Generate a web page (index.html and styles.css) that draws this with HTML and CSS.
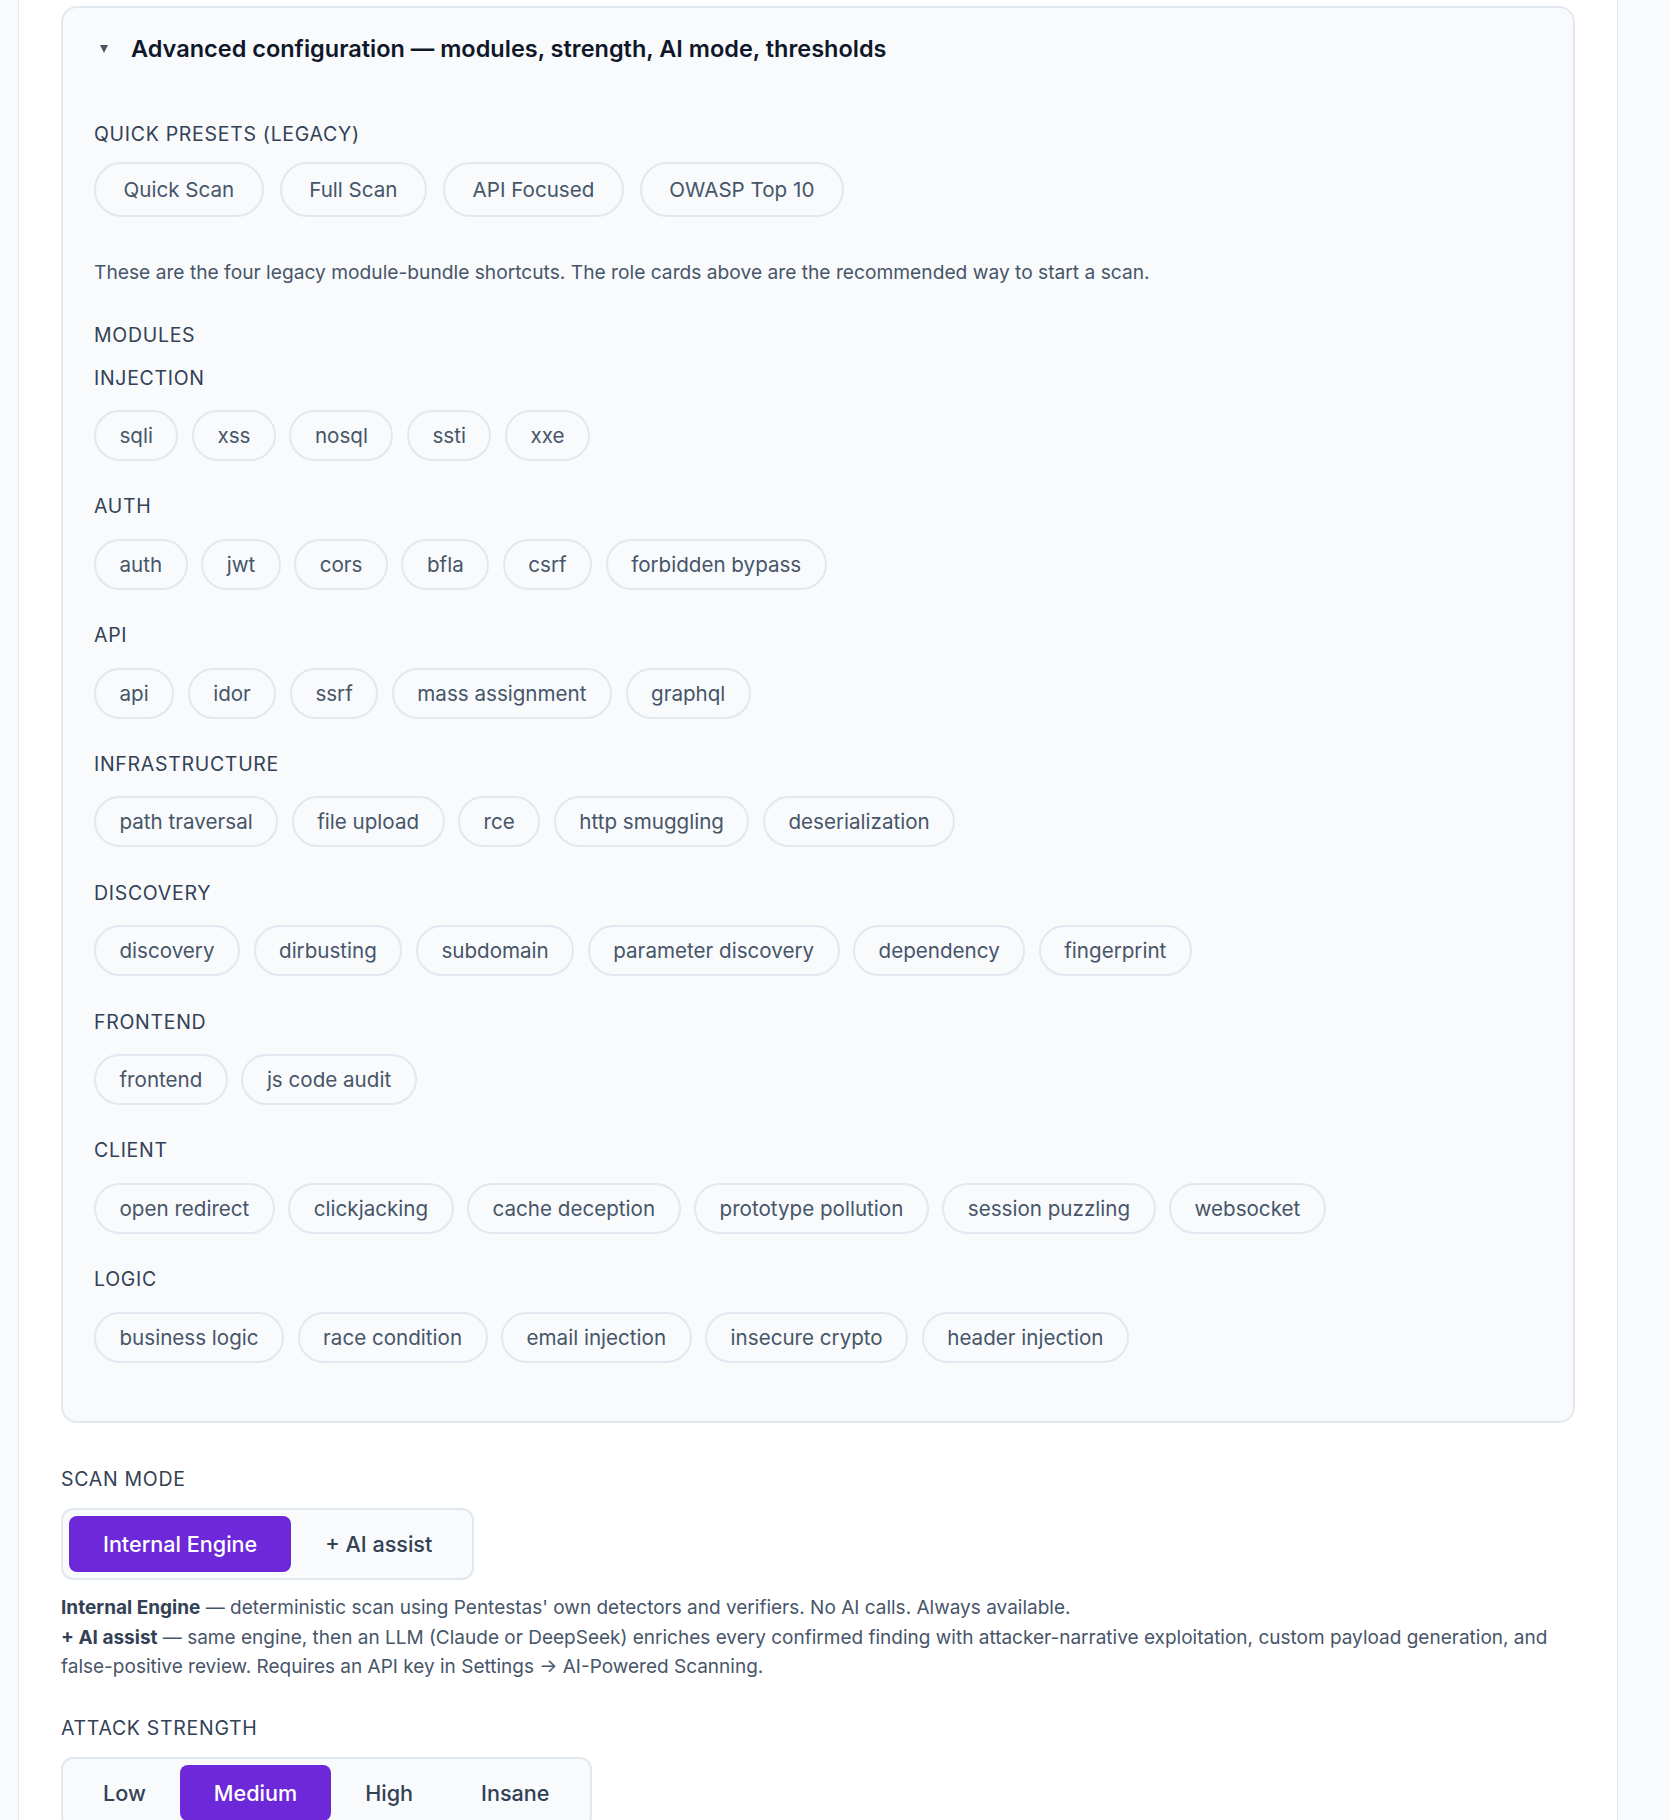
FILE: index.html
```html
<!DOCTYPE html>
<html lang="en">
<head>
    <meta charset="UTF-8">
    <meta name="viewport" content="width=device-width, initial-scale=1.0">
    <title>New Scan</title>
    <link rel="stylesheet" href="styles.css">
</head>
<body>
    <div class="page">
        <details class="advanced" open>
            <summary class="advanced-head">
                <span class="caret"></span>
                Advanced configuration — modules, strength, AI mode, thresholds
            </summary>

            <div class="advanced-body">
                <div class="section-label">Quick presets (legacy)</div>
                <div class="chips presets">
                    <button type="button" class="chip">Quick Scan</button>
                    <button type="button" class="chip">Full Scan</button>
                    <button type="button" class="chip">API Focused</button>
                    <button type="button" class="chip">OWASP Top 10</button>
                </div>
                <p class="hint">These are the four legacy module-bundle shortcuts. The role cards above are the recommended way to start a scan.</p>

                <div class="section-label modules-label">Modules</div>

                <div class="group">
                    <div class="section-label">Injection</div>
                    <div class="chips">
                        <button type="button" class="chip">sqli</button>
                        <button type="button" class="chip">xss</button>
                        <button type="button" class="chip">nosql</button>
                        <button type="button" class="chip">ssti</button>
                        <button type="button" class="chip">xxe</button>
                    </div>
                </div>

                <div class="group">
                    <div class="section-label">Auth</div>
                    <div class="chips">
                        <button type="button" class="chip">auth</button>
                        <button type="button" class="chip">jwt</button>
                        <button type="button" class="chip">cors</button>
                        <button type="button" class="chip">bfla</button>
                        <button type="button" class="chip">csrf</button>
                        <button type="button" class="chip">forbidden bypass</button>
                    </div>
                </div>

                <div class="group">
                    <div class="section-label">API</div>
                    <div class="chips">
                        <button type="button" class="chip">api</button>
                        <button type="button" class="chip">idor</button>
                        <button type="button" class="chip">ssrf</button>
                        <button type="button" class="chip">mass assignment</button>
                        <button type="button" class="chip">graphql</button>
                    </div>
                </div>

                <div class="group">
                    <div class="section-label">Infrastructure</div>
                    <div class="chips">
                        <button type="button" class="chip">path traversal</button>
                        <button type="button" class="chip">file upload</button>
                        <button type="button" class="chip">rce</button>
                        <button type="button" class="chip">http smuggling</button>
                        <button type="button" class="chip">deserialization</button>
                    </div>
                </div>

                <div class="group">
                    <div class="section-label">Discovery</div>
                    <div class="chips">
                        <button type="button" class="chip">discovery</button>
                        <button type="button" class="chip">dirbusting</button>
                        <button type="button" class="chip">subdomain</button>
                        <button type="button" class="chip">parameter discovery</button>
                        <button type="button" class="chip">dependency</button>
                        <button type="button" class="chip">fingerprint</button>
                    </div>
                </div>

                <div class="group">
                    <div class="section-label">Frontend</div>
                    <div class="chips">
                        <button type="button" class="chip">frontend</button>
                        <button type="button" class="chip">js code audit</button>
                    </div>
                </div>

                <div class="group">
                    <div class="section-label">Client</div>
                    <div class="chips">
                        <button type="button" class="chip">open redirect</button>
                        <button type="button" class="chip">clickjacking</button>
                        <button type="button" class="chip">cache deception</button>
                        <button type="button" class="chip">prototype pollution</button>
                        <button type="button" class="chip">session puzzling</button>
                        <button type="button" class="chip">websocket</button>
                    </div>
                </div>

                <div class="group">
                    <div class="section-label">Logic</div>
                    <div class="chips">
                        <button type="button" class="chip">business logic</button>
                        <button type="button" class="chip">race condition</button>
                        <button type="button" class="chip">email injection</button>
                        <button type="button" class="chip">insecure crypto</button>
                        <button type="button" class="chip">header injection</button>
                    </div>
                </div>
            </div>
        </details>

        <div class="field scan-mode">
            <div class="section-label">Scan mode</div>
            <div class="segmented">
                <button type="button" class="seg active">Internal Engine</button>
                <button type="button" class="seg">+ AI assist</button>
            </div>
            <div class="mode-help">
                <p><strong>Internal Engine</strong> — deterministic scan using Pentestas' own detectors and verifiers. No AI calls. Always available.</p>
                <p><strong>+ AI assist</strong> — same engine, then an LLM (Claude or DeepSeek) enriches every confirmed finding with attacker-narrative exploitation, custom payload generation, and false-positive review. Requires an API key in Settings → AI-Powered Scanning.</p>
            </div>
        </div>

        <div class="field strength">
            <div class="section-label">Attack strength</div>
            <div class="segmented">
                <button type="button" class="seg">Low</button>
                <button type="button" class="seg active">Medium</button>
                <button type="button" class="seg">High</button>
                <button type="button" class="seg">Insane</button>
            </div>
        </div>
    </div>
</body>
</html>
```

FILE: styles.css
```css
body {
    margin: 0;
    background: #f8fafc;
    font-family: Inter, "Noto Sans", sans-serif;
    color: #475569;
}

.page {
    margin-left: 18px;
    width: 1600px;
    min-height: 1900px;
    box-sizing: border-box;
    padding: 6px 42px 0 42px;
    background: #fff;
    border-left: 1px solid #e2e8f0;
    border-right: 1px solid #e2e8f0;
}

/* collapsible advanced block */
.advanced {
    background: #f8fafc;
    border: 2px solid #e2e8f0;
    border-radius: 16px;
}

.advanced-head {
    list-style: none;
    display: flex;
    align-items: center;
    padding: 24px 31px 0 31px;
    font-size: 23.5px;
    font-weight: 600;
    line-height: 34px;
    color: #0f172a;
    cursor: pointer;
}

.advanced-head::-webkit-details-marker {
    display: none;
}

.caret {
    width: 0;
    height: 0;
    margin: 0 23px 0 6px;
    border-left: 4px solid transparent;
    border-right: 4px solid transparent;
    border-top: 8px solid #4b5563;
}

.advanced-body {
    padding: 54px 31px 27px 31px;
}

.section-label {
    font-size: 19.5px;
    line-height: 28px;
    letter-spacing: 0.7px;
    text-transform: uppercase;
    color: #334155;
}

.chips {
    display: flex;
    flex-wrap: wrap;
    gap: 13.5px;
    margin-top: 18.5px;
}

.chip {
    font-family: inherit;
    font-size: 20.6px;
    line-height: 27px;
    padding: 10px 23.5px;
    color: #475569;
    background: #f8fafc;
    border: 2px solid #e2e8f0;
    border-radius: 999px;
    cursor: pointer;
}

.presets {
    gap: 16px;
    margin-top: 14px;
}

.presets .chip {
    line-height: 29px;
    padding: 11px 27.5px;
}

.hint {
    margin: 40.6px 0 0 0;
    font-size: 19.2px;
    line-height: 28px;
    color: #475569;
}

.modules-label {
    margin-top: 35px;
}

.group {
    margin-top: 15px;
    margin-bottom: 31.3px;
}

.group + .group {
    margin-top: 0;
}

/* fields under the card */
.scan-mode {
    margin-top: 42px;
}

.strength {
    margin-top: 32.6px;
}

.segmented {
    display: inline-flex;
    margin-top: 15px;
    padding: 6px;
    background: #f8fafc;
    border: 2px solid #e2e8f0;
    border-radius: 12px;
}

.seg {
    font-family: inherit;
    font-size: 21.6px;
    font-weight: 500;
    height: 56px;
    padding: 0 34px;
    color: #334155;
    background: none;
    border: none;
    border-radius: 8px;
    cursor: pointer;
}

.seg.active {
    background: #6d28d9;
    color: #fff;
}

.mode-help {
    margin-top: 13.5px;
    font-size: 19px;
    line-height: 29.2px;
    color: #475569;
}

.mode-help p {
    margin: 0;
}

.mode-help strong {
    font-weight: 700;
    color: #334155;
}
```
